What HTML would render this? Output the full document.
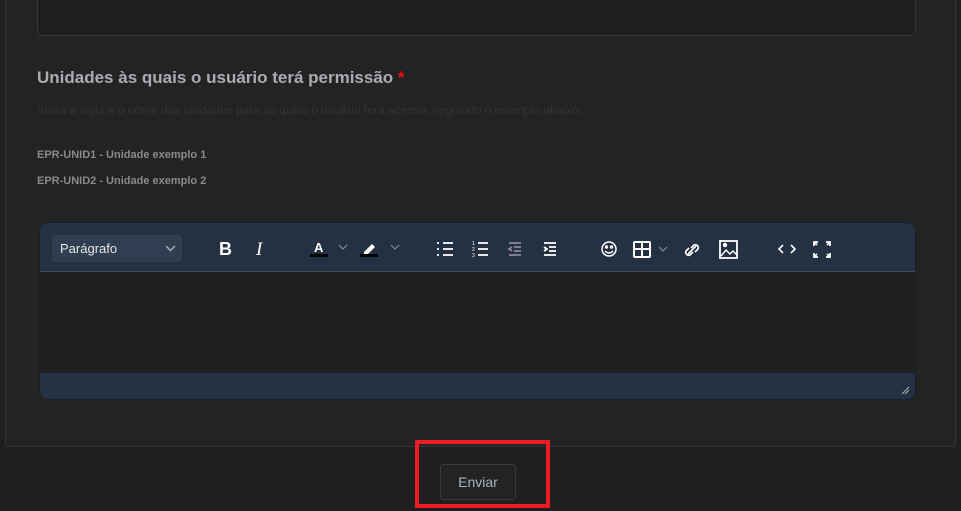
<!DOCTYPE html>
<html><head><meta charset="utf-8"><style>
*{box-sizing:border-box;margin:0;padding:0}
body{width:961px;height:511px;background:#1f1f1f;font-family:"Liberation Sans",sans-serif;position:relative;overflow:hidden}
.card{position:absolute;left:5px;top:-10px;width:951px;height:457px;background:#232323;border:1px solid #333;border-radius:4px}
.inp{position:absolute;left:37px;top:-5px;width:879px;height:41px;background:#1e1e1e;border:1px solid #363636;border-radius:5px}
h2{position:absolute;left:37px;top:68px;font-size:17px;font-weight:bold;color:#a9adb3}
h2 span{color:#e11}
.hint{position:absolute;left:37px;top:103px;font-size:12px;color:#343434}
.ex{position:absolute;left:37px;font-size:11px;font-weight:bold;color:#8a8a8a}
.ed{position:absolute;left:39px;top:222px;width:877px;height:178px;background:#1f1f1f;border:1px solid #16202c;border-radius:9px;overflow:hidden}
.tb{position:absolute;left:0;top:0;width:100%;height:49px;background:#243142;border-bottom:1px solid #3d4a5a}
.sb{position:absolute;left:0;bottom:0;width:100%;height:26px;background:#243142}
.sel{position:absolute;left:12px;top:12px;width:130px;height:27px;background:#2f3e51;border-radius:3px;color:#e6e6e6;font-size:13px;padding:6px 8px}
.ic{position:absolute;top:13px}
.red{position:absolute;left:415px;top:440px;width:135px;height:68px;border:4px solid #ec1c24}
.btn{position:absolute;left:440px;top:464px;width:76px;height:36px;background:#232323;border:1px solid #3a3a3a;border-radius:3px;color:#a7b4c2;font-size:14px;text-align:center;line-height:34px}
</style></head><body>
<div class="card"></div>
<div class="inp"></div>
<h2>Unidades às quais o usuário terá permissão <span>*</span></h2>
<div class="hint">Insira a sigla e o nome das unidades para as quais o usuário terá acesso, seguindo o exemplo abaixo:</div>
<div class="ex" style="top:149px">EPR-UNID1 - Unidade exemplo 1</div>
<div class="ex" style="top:175px">EPR-UNID2 - Unidade exemplo 2</div>
<div class="ed">
<div class="tb">
<div class="sel">Parágrafo<svg style="position:absolute;right:6px;top:10px" width="11" height="7"><path d="M1 1l4.5 4.5L10 1" stroke="#aab" fill="none" stroke-width="1.5"/></svg></div>
<svg class="ic" style="left:170px" width="700" height="24" fill="none" stroke="#fff" stroke-width="1.8">
<text x="9" y="19" fill="#fff" stroke="none" font-size="18" font-weight="bold" font-family="Liberation Sans">B</text>
<text x="46" y="19" fill="#fff" stroke="none" font-size="19" font-style="italic" font-family="Liberation Serif">I</text>
<text x="104" y="16" fill="#fff" stroke="none" font-size="13" font-weight="bold" font-family="Liberation Sans">A</text>
<rect x="100" y="18" width="18" height="3" fill="#000" stroke="none"/>
<path d="M129 9l4 4 4-4" stroke="#889" stroke-width="1.2"/>
<path d="M154 16l8-8 3 3-8 8h-3z" fill="#fff" stroke="none"/>
<rect x="150" y="18" width="18" height="3" fill="#000" stroke="none"/>
<path d="M181 9l4 4 4-4" stroke="#889" stroke-width="1.2"/>
<path d="M233 7h10M233 13h10M233 19h10M227 7h2M227 13h2M227 19h2"/>
<path d="M268 7h10M268 13h10M268 19h10" /><text x="262" y="9" fill="#fff" stroke="none" font-size="5">1</text><text x="262" y="15" fill="#fff" stroke="none" font-size="5">2</text><text x="262" y="21" fill="#fff" stroke="none" font-size="5">3</text>
<path d="M299 7h12M304 11h7M304 15h7M299 19h12M302 11l-3 2 3 2" stroke="#889"/>
<path d="M334 7h12M339 11h7M339 15h7M334 19h12M334 11l3 2-3 2"/>
<circle cx="399" cy="13" r="7" stroke-width="1.5"/><path d="M395 15q4 4 8 0" stroke-width="1.5"/><circle cx="396.5" cy="11" r=".8" fill="#fff"/><circle cx="401.5" cy="11" r=".8" fill="#fff"/>
<rect x="424" y="6" width="16" height="15" rx="1" stroke-width="2"/><path d="M424 13h16M432 6v15" stroke-width="2"/>
<path d="M449 11l4 4 4-4" stroke="#889" stroke-width="1.2"/>
<path d="M478 18l8-8M481 12l3-3a3 3 0 014 4l-3 3M483 16l-3 3a3 3 0 01-4-4l3-3" stroke-width="1.6"/>
<rect x="510" y="5" width="17" height="17" stroke-width="1.8"/><path d="M511 20l5-6 4 4 3-3 4 4" stroke-width="1.4"/><circle cx="515" cy="9" r="1.3" fill="#fff"/>
<path d="M573 9l-4 4 4 4M581 9l4 4-4 4" stroke-width="1.6"/>
<path d="M604 10V6h4M616 6h4v4M604 17v4h4M620 17v4h-4M604 6l3 3M620 6l-3 3M604 21l3-3M620 21l-3-3" stroke-width="1.8"/>
</svg>
</div>
<div class="sb"><svg style="position:absolute;right:5px;bottom:4px" width="9" height="9"><path d="M1 8L8 1M4 8L8 4" stroke="#aaa"/></svg></div>
</div>
<div class="red"></div>
<div class="btn">Enviar</div>
</body></html>
